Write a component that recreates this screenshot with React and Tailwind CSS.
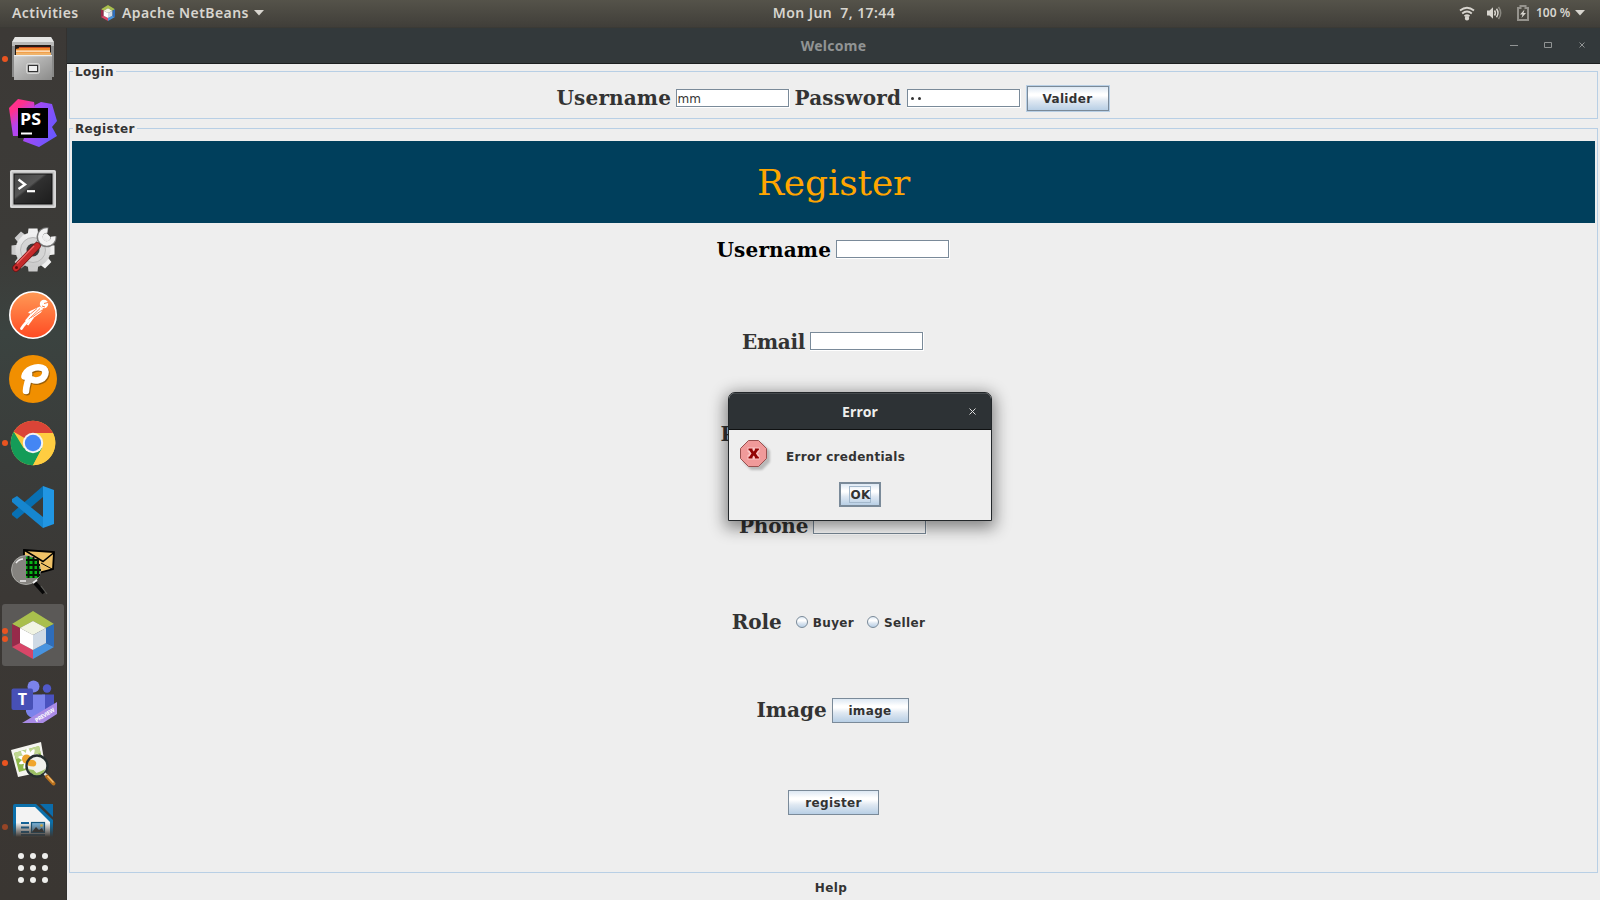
const LABEL = "font-['DejaVu_Serif',serif] font-bold text-[20px] leading-[24px] whitespace-nowrap shrink-0";
const SMALL = "font-['DejaVu_Sans',sans-serif] font-bold text-[12px] tracking-[0.35px] text-[#333] whitespace-nowrap";
const BAR = "font-['Noto_Sans',sans-serif] text-[14px] leading-[18px] tracking-[0.42px] whitespace-nowrap";
const GRAD = "bg-[linear-gradient(180deg,#dde8f3_0%,#ffffff_30%,#ffffff_38%,#dfe8f2_60%,#b8cfe5_100%)]";

function Field({ children }) {
  return (
    <div className="h-[19px] w-[114px] shrink-0 border-r border-b border-white">
      <div className="flex h-[18px] w-[113px] items-center border border-[#7a8a99] bg-white pt-[1px] pl-[1px] font-['DejaVu_Sans',sans-serif] text-[12px] leading-none text-[#333]">
        {children}
      </div>
    </div>
  );
}

function Button({ children, className = "" }) {
  return (
    <div className={`flex h-[25px] shrink-0 items-center justify-center border border-[#7a8a99] ${GRAD} ${SMALL} ${className}`}>
      {children}
    </div>
  );
}

function Row({ label, labelClass, className = "", children }) {
  return (
    <div className={`flex h-[92px] items-start justify-center gap-[5px] pt-[15px] ${className}`}>
      <div className={`${LABEL} ${labelClass}`}>{label}</div>
      {children}
    </div>
  );
}

function Panel({ title, className, children }) {
  return (
    <div className={`relative border border-[#b8cfe5] ${className}`}>
      <div className={`absolute -top-[7px] left-[3px] bg-[#eee] pr-[2px] pl-[2px] leading-[15px] ${SMALL}`}>{title}</div>
      {children}
    </div>
  );
}

function Files() {
  return (
    <svg viewBox="0 0 48 48" className="size-[48px]">
      <defs>
        <linearGradient id="fa" x1="0" y1="0" x2="1" y2="1"><stop offset="0" stopColor="#d0d0cf" /><stop offset="1" stopColor="#8b8b8a" /></linearGradient>
      </defs>
      <path d="M6 2h36l3 5v35H3V7z" fill="#8a8a89" />
      <path d="M6 2h36l3 5H3z" fill="#e4e4e3" />
      <path d="M3 7h42v4H3z" fill="#b9b9b8" />
      <path d="M6 10h36v11H6z" fill="#241b17" />
      <path d="M10 12h31v4H10z" fill="#c64a1d" />
      <path d="M7 14l4-1h30v6H7z" fill="#f28a2c" />
      <path d="M7 15.500h34v1.200H7z" fill="#fff3dd" />
      <path d="M7 17.500h35v2.500H7z" fill="#efb36a" />
      <path d="M5 20h38v25H5z" fill="url(#fa)" />
      <path d="M5 20h38v1.200H5z" fill="#eee" />
      <rect x="17.500" y="28.500" width="13" height="10" rx="2" fill="#b0b0af" stroke="#d8d8d7" />
      <rect x="19.500" y="30.500" width="9" height="6" fill="#eee" stroke="#333" />
    </svg>
  );
}

function PhpStorm() {
  return (
    <svg viewBox="0 0 48 48" className="size-[48px]">
      <defs>
        <linearGradient id="p1" x1="0" y1="0" x2=".6" y2="1"><stop offset=".3" stopColor="#ff318c" /><stop offset=".65" stopColor="#b345f1" /></linearGradient>
        <linearGradient id="p2" x1="0" y1="0" x2="1" y2=".5"><stop offset=".2" stopColor="#b345f1" /><stop offset="1" stopColor="#6b57ff" /></linearGradient>
      </defs>
      <path d="M26 6l6-3 11 2 5 17-5 6 5 9-18 11-16-6z" fill="url(#p2)" />
      <path d="M9 0l16 3 2 12-13 22H4L0 9z" fill="url(#p1)" />
      <rect x="9" y="9" width="30" height="30" fill="#000" />
      <rect x="12" y="33.500" width="11" height="2" fill="#fff" />
      <text x="11" y="25.500" fill="#fff" fontSize="16.500" fontWeight="700" fontFamily="Open Sans, sans-serif" textLength="21" lengthAdjust="spacingAndGlyphs">PS</text>
    </svg>
  );
}

function Terminal() {
  return (
    <svg viewBox="0 0 48 48" className="size-[48px]">
      <defs><linearGradient id="t1" x1="0" y1="0" x2="1" y2="1"><stop offset="0" stopColor="#444" /><stop offset=".4" stopColor="#555" /><stop offset=".45" stopColor="#303030" /><stop offset="1" stopColor="#1c1c1c" /></linearGradient></defs>
      <rect x="1" y="5" width="46" height="38" rx="1.500" fill="#c3c3c3" />
      <rect x="2" y="6" width="44" height="36" rx="1" fill="none" stroke="#e9e9e9" />
      <rect x="5" y="9" width="38" height="30" fill="url(#t1)" stroke="#111" />
      <path d="M9.500 14.500l6.500 5-6.500 4.500" fill="none" stroke="#fff" strokeWidth="2.400" />
      <path d="M18 26.200h8" stroke="#fff" strokeWidth="2.200" />
    </svg>
  );
}

function Settings() {
  return (
    <svg viewBox="0 0 48 48" className="size-[48px]">
      <defs><linearGradient id="s1" x1="0" y1="0" x2="0" y2="1"><stop offset="0" stopColor="#f2f2f2" /><stop offset="1" stopColor="#c9c9c9" /></linearGradient></defs>
      {[0, 45, 90, 135].map((a) => (
        <path key={a} d="M19.500 2.500h9l1 8h-11zM19.500 45.500h9l1-8h-11z" fill="url(#s1)" transform={`rotate(${a} 24 24)`} />
      ))}
      <circle cx="24" cy="24" r="17.500" fill="url(#s1)" />
      <circle cx="24" cy="24" r="12.500" fill="#d5d5d5" stroke="#b7b7b7" />
      <circle cx="24" cy="24" r="6.500" fill="#3c3c3c" />
      <path d="M29 18l4-4" stroke="#777" strokeWidth="6.400" />
      <path d="M28 19l6-6" stroke="#f2f2f2" strokeWidth="4.800" />
      <path d="M39 4.500A7 7 0 1 0 44.500 10.500" fill="none" stroke="#777" strokeWidth="6" />
      <path d="M38.500 4.500A6.500 6.500 0 1 0 44.300 10.500" fill="none" stroke="#f2f2f2" strokeWidth="4.600" />
      <path d="M7 42L28 20" stroke="#6e1212" strokeWidth="7.400" strokeLinecap="round" />
      <path d="M7 42L28 20" stroke="#c42a2a" strokeWidth="6" strokeLinecap="round" />
      <path d="M8 37.500L25 20" stroke="#e66" strokeWidth="1.200" />
      <circle cx="7.500" cy="41.500" r="1.500" fill="#5c0d0d" />
    </svg>
  );
}

function Postman() {
  return (
    <svg viewBox="0 0 48 48" className="size-[48px]">
      <defs><linearGradient id="o1" x1="0" y1="0" x2="0" y2="1"><stop offset="0" stopColor="#ff9a56" /><stop offset="1" stopColor="#ff4a22" /></linearGradient></defs>
      <circle cx="24" cy="24" r="23.200" fill="url(#o1)" stroke="#fff" strokeWidth="1.600" />
      <circle cx="35" cy="13" r="4.200" fill="#fff" />
      <path d="M35 12.500l4-1M33 15l3 1" stroke="#ff7a40" strokeWidth="1" />
      <path d="M31 15.500l-10 4.500-2 2 3 .5-6 7 3 1.500 6-4.500 7-5 2-4z" fill="#fff" />
      <path d="M31 17.500L19 29M33 19l-11 8M28 17.500l-6 5" stroke="#ff7640" strokeWidth=".9" />
      <path d="M19 29.500l-4.500 5-2 3" fill="none" stroke="#fff" strokeWidth="2.800" strokeLinecap="round" />
      <path d="M24 26.500l-5.500 7.500" stroke="#fff" strokeWidth="2" />
    </svg>
  );
}

function Pencil() {
  const glyph = "M15.500 21.500C17 14 27 11 33 12.800S37 23.500 29 25.200C26 26 24 25 23 24.500M20 18C20.500 24 17 30 17 36";
  return (
    <svg viewBox="0 0 48 48" className="size-[48px]">
      <circle cx="24" cy="24" r="24" fill="#f18f00" />
      <g fill="none" strokeLinecap="round" strokeLinejoin="round">
        <path d={glyph} stroke="#9a5f08" strokeWidth="6.600" transform="translate(1 1.200)" />
        <path d={glyph} stroke="#fff" strokeWidth="6.600" />
      </g>
    </svg>
  );
}

function Chrome() {
  return (
    <svg viewBox="0 0 48 48" className="size-[48px]">
      <circle cx="24" cy="24" r="22.300" fill="#fdc83b" />
      <path d="M24 24L4.700 12.850A22.300 22.300 0 0 1 43.300 12.850L44 14H24z" fill="#da4437" />
      <path d="M4.700 12.850A22.300 22.300 0 0 0 24 46.300L33.400 29 24 24 14.600 29z" fill="#149c58" />
      <path d="M24 46.300L33 29 24 24V14h20a22.300 22.300 0 0 1-20 32.300z" fill="#ffcd41" />
      <circle cx="24" cy="24" r="10.200" fill="#f3f3f3" />
      <circle cx="24" cy="24" r="8.200" fill="#4486f4" />
    </svg>
  );
}

function VsCode() {
  return (
    <svg viewBox="0 0 48 48" className="size-[48px]">
      <path d="M34 3v11L8 36l-5-4v-2z" fill="#0870b3" />
      <path d="M34 45V34L8 13l-5 3v3z" fill="#1686cf" />
      <path d="M34 3l11 4v34l-11 4z" fill="#2196e3" />
    </svg>
  );
}

function MailSearch() {
  return (
    <svg viewBox="0 0 48 48" className="size-[48px]">
      <path d="M15 3l30 2-1 17-15 4-14 2z" fill="#efc267" stroke="#000" strokeWidth="1.800" />
      <path d="M16 3.500l18 11 11-9" fill="none" stroke="#000" strokeWidth="1.600" />
      <path d="M32 16l11 6" stroke="#000" strokeWidth="1" />
      <circle cx="17" cy="23" r="14.500" fill="#85837f" stroke="#a9a9a5" />
      <path d="M17 9.500a14 14 0 0 1 13.500 18L29 31H17z" fill="#08b416" />
      <path d="M17 13h11M17 18h14M17 23h15M17 28h14M19.500 9v22M24.500 10v21M29 12v18" stroke="#021804" strokeWidth="2" />
      <path d="M7 16q3-4 7-4M11 34h6" stroke="#eee" strokeWidth="1.500" fill="none" />
      <path d="M24 36l4-3" stroke="#eee" strokeWidth="1.800" />
      <path d="M26 36l9 10" stroke="#070707" strokeWidth="4" />
      <path d="M32 39l6 8" stroke="#5c5c58" strokeWidth="1.200" />
    </svg>
  );
}

function NetBeans({ className }) {
  return (
    <svg viewBox="0 0 48 48" className={className}>
      <path d="M24 0l21 13-8 4-13-7-13 7-8-4z" fill="#a9bf4d" />
      <path d="M3 13l8 4v15l-8 4z" fill="#962a4a" />
      <path d="M3 36l8-4 13 7v9z" fill="#d84668" />
      <path d="M24 48v-9l13-7 8 4z" fill="#4893df" />
      <path d="M45 13v23l-8-4V17z" fill="#2e6dbb" />
      <path d="M24 10l13 7-13 7-13-7z" fill="#f1f4e3" />
      <path d="M11 17l13 7v15l-13-7z" fill="#fff" />
      <path d="M37 17v15l-13 7V24z" fill="#cfdae5" />
    </svg>
  );
}

function Teams() {
  return (
    <svg viewBox="0 0 48 48" className="size-[48px]">
      <circle cx="24.500" cy="8.500" r="6" fill="#7b83eb" />
      <circle cx="38" cy="10.500" r="4.200" fill="#5059c9" />
      <path d="M33 16.500h12v15a8 8 0 0 1-12 4z" fill="#4a52bf" />
      <path d="M16 16.500h20v17c-3 9-17 9-19 0z" fill="#7b83eb" />
      <rect x="2.500" y="10.500" width="21.500" height="21.500" rx="2" fill="#4750b6" />
      <text x="13.300" y="27" textAnchor="middle" fill="#fff" fontSize="16" fontWeight="700" fontFamily="Open Sans, sans-serif">T</text>
      <path d="M13 45L48 24v12L34 45z" fill="#a98be6" />
      <text transform="translate(27.500 44.500) rotate(-32)" fill="#fff" fontSize="5.600" fontWeight="700" fontFamily="Open Sans, sans-serif" textLength="22">PREVIEW</text>
    </svg>
  );
}

function ImageViewer() {
  return (
    <svg viewBox="0 0 48 48" className="size-[48px]">
      <path d="M2 11l30-8 5 29-28 6z" fill="#f4f4ef" />
      <path d="M5 14l25-7 4.500 19L10 33z" fill="#8fb94a" />
      <path d="M5 14l25-7 1.500 7L7 20z" fill="#bfd690" />
      <g fill="#fff">
        {[10, 46, 82, 118, 154].map((a) => (
          <ellipse key={a} cx="20" cy="20" rx="11" ry="2.600" transform={`rotate(${a} 20 20)`} />
        ))}
      </g>
      <circle cx="17.500" cy="20" r="4.500" fill="#eba52d" />
      <circle cx="28" cy="27" r="10.500" fill="#eff1ec" />
      <path d="M18.500 30l6 1 3 3 5-2 4-2q-2 5-7 6.500T18.500 30z" fill="#9cc065" />
      <path d="M19 22q5-3 8 1 1 4-2 4.500-4 0-6-1z" fill="#f0a62d" />
      <circle cx="28" cy="27" r="10.500" fill="none" stroke="#26302f" strokeWidth="2.400" />
      <path d="M35.500 34.500l3 3" stroke="#ddd" strokeWidth="2.500" />
      <path d="M38 37.500l6.500 7" stroke="#b8701d" strokeWidth="4" strokeLinecap="round" />
      <path d="M38.500 37l6 6.500" stroke="#f3b968" strokeWidth="1.500" />
    </svg>
  );
}

function Writer() {
  return (
    <svg viewBox="0 0 48 36" className="h-[36px] w-[48px]">
      <defs><linearGradient id="w1" x1="0" y1="0" x2="0" y2="1"><stop offset=".6" stopColor="#3a3632" stopOpacity="0" /><stop offset="1" stopColor="#3a3632" /></linearGradient></defs>
      <path d="M4 5a2 2 0 0 1 2-2h21l17 16v17H4z" fill="#0c70ab" />
      <path d="M7 6h19l15 15v15H7z" fill="#f3f3f3" />
      <path d="M31 3h13v13z" fill="#0b6cab" />
      <path d="M12 22h8M12 26.500h8M12 31h8M12 34h24" stroke="#14649a" strokeWidth="1.800" />
      <rect x="22.500" y="21.500" width="13" height="10" fill="#7ab3da" stroke="#14577f" strokeWidth="1.200" />
      <path d="M23 31l4-5 3 3 3-2 2 4z" fill="#333" />
      <circle cx="32.500" cy="24.500" r="1.300" fill="#f4c23c" />
      <rect width="48" height="36" fill="url(#w1)" />
    </svg>
  );
}

function DockItem({ dots = 0, dim = false, className = "", children }) {
  return (
    <div className={`relative flex shrink-0 justify-center ${className}`}>
      {dots > 0 && (
        <div className={`absolute bottom-0 left-[2px] flex flex-col justify-center gap-[2px] ${dim ? "top-[15px]" : "top-0"}`}>
          {Array.from({ length: dots }).map((_, i) => (
            <div key={i} className={`size-[6px] rounded-full ${dim ? "bg-[#964527]" : "bg-[#e95420]"}`} />
          ))}
        </div>
      )}
      {children}
    </div>
  );
}

function Dock() {
  return (
    <div className="flex w-[67px] shrink-0 flex-col bg-[linear-gradient(180deg,#3c3936_0%,#3c3b38_25%,#3b4340_35%,#3a3c3a_50%,#3b3835_65%,#3a3632_100%)] pt-[7px] pr-[1px] shadow-[inset_-1px_0_0_#33312f]">
      <DockItem dots={1}><Files /></DockItem>
      <DockItem className="mt-[16px]"><PhpStorm /></DockItem>
      <DockItem className="mt-[18px]"><Terminal /></DockItem>
      <DockItem className="mt-[13px]"><Settings /></DockItem>
      <DockItem className="mt-[17px]"><Postman /></DockItem>
      <DockItem className="mt-[16px]"><Pencil /></DockItem>
      <DockItem className="mt-[16px]" dots={1}><Chrome /></DockItem>
      <DockItem className="mt-[16px]"><VsCode /></DockItem>
      <DockItem className="mt-[16px]"><MailSearch /></DockItem>
      <DockItem className="mt-[9px] h-[62px] items-center">
        <div className="flex h-[62px] w-[62px] items-center justify-center rounded-[3px] bg-[#5b5957]"><NetBeans className="size-[48px]" /></div>
        <div className="absolute top-0 bottom-0 left-[2px] flex flex-col justify-center gap-[2px]">
          <div className="size-[6px] rounded-full bg-[#e95420]" />
          <div className="size-[6px] rounded-full bg-[#e95420]" />
        </div>
      </DockItem>
      <DockItem className="mt-[12px]"><Teams /></DockItem>
      <DockItem className="mt-[13px]" dots={1}><ImageViewer /></DockItem>
      <DockItem className="mt-[14px]" dots={1} dim><Writer /></DockItem>
      <div className="mt-[16px] grid grid-cols-3 gap-[6px] self-center">
        {Array.from({ length: 9 }).map((_, i) => (
          <div key={i} className="size-[6px] rounded-full bg-[#eeeeec]" />
        ))}
      </div>
    </div>
  );
}

function TopBar() {
  return (
    <div className="grid h-[28px] shrink-0 grid-cols-[1fr_auto_1fr] items-center border-b border-[#3b3a35] bg-[linear-gradient(180deg,#55534a,#403e39)] pb-[1px] text-[#d8d5cf]">
      <div className="flex items-center pl-[12px]">
        <span className={`-mt-[1px] w-[68px] font-semibold ${BAR}`}>Activities</span>
        <NetBeans className="ml-[20px] size-[16px]" />
        <span className={`-mt-[1px] ml-[6px] w-[127px] font-semibold ${BAR}`}>Apache NetBeans</span>
        <svg viewBox="0 0 10 6" className="ml-[5px] h-[6px] w-[10px]"><path d="M0 0h10L5 5.500z" fill="currentColor" /></svg>
      </div>
      <span className={`-mt-[1px] pl-[68px] font-semibold ${BAR}`}>Mon Jun&nbsp; 7, 17:44</span>
      <div className="flex items-center justify-end pr-[15px]">
        <svg viewBox="0 0 16 16" className="h-[16px] w-[16px]" fill="none" stroke="currentColor" strokeWidth="1.800">
          <path d="M1 5.500q7-5.500 14 0M3.200 8.500q4.800-4 9.600 0M5.500 11.200q2.500-2 5 0" /><circle cx="8" cy="13.200" r="1.300" fill="currentColor" />
        </svg>
        <svg viewBox="0 0 16 16" className="ml-[11px] h-[16px] w-[16px]" fill="none" stroke="currentColor" strokeWidth="1.500">
          <path d="M1 5.500h2.500L7 2.200v11.600L3.500 10.500H1z" fill="currentColor" stroke="none" />
          <path d="M8.500 5.500q1.800 2.500 0 5M10.500 3.800q3 4.200 0 8.400" /><path d="M12.500 2q4.400 6 0 12" opacity=".45" />
        </svg>
        <svg viewBox="0 0 12 16" className="ml-[15px] h-[16px] w-[12px]">
          <path d="M1 3h2.500V1h5v2H11v12H1z" fill="none" stroke="#95938d" strokeWidth="2" /><path d="M7.500 4.500L3 9.500h2.500L4.500 13 9 8H6.500z" fill="currentColor" />
        </svg>
        <span className="ml-[7px] w-[33px] font-['Noto_Sans',sans-serif] text-[12px] font-semibold whitespace-nowrap">100 %</span>
        <svg viewBox="0 0 10 6" className="ml-[6px] h-[6px] w-[10px]"><path d="M0 0h10L5 5.500z" fill="currentColor" /></svg>
      </div>
    </div>
  );
}

function Dialog() {
  return (
    <div className="absolute top-[392px] left-[728px] flex h-[129px] w-[264px] flex-col overflow-hidden rounded-t-[7px] border border-[#23272a] bg-[#eee] shadow-[0_4px_16px_3px_rgba(0,0,0,0.45)]">
      <div className="relative flex h-[37px] items-center justify-center border-t border-b border-t-[#454a4d] border-b-[#0f1112] bg-[#2d3235]">
        <span className="font-['Noto_Sans',sans-serif] text-[14px] font-bold tracking-[0.2px] text-[#eeeeec]">Error</span>
        <svg viewBox="0 0 7 7" className="absolute top-[14px] right-[15px] size-[7px]"><path d="M.5.500l6 6M6.500.500l-6 6" stroke="#dcdcdc" strokeWidth="1" /></svg>
      </div>
      <div className="flex h-[52px] pt-[10px] pl-[11px]">
        <svg viewBox="0 0 32 32" className="size-[32px]">
          <path d="M11 3h11l8 8v11l-8 8H11l-8-8V11z" fill="#000" opacity=".22" className="blur-[1px]" />
          <path d="M8.500.500h10l8 8v10l-8 8h-10l-8-8v-10z" fill="#f09a9a" stroke="#98504f" />
          <path d="M7.500 7.500h12v4l-2 2 2 2v4h-12v-4l2-2-2-2z" fill="#fbc4c4" />
          <path d="M8.500 8.500h4v1.400l1.200 1.600 1.200-1.600V8.500h4v1.800h-.8l-2.200 3.200 2.200 3.200h.8v1.800h-4v-1.400l-1.200-1.600-1.200 1.600v1.400h-4v-1.800h.8l2.200-3.200-2.200-3.200h-.8z" fill="#930606" />
        </svg>
        <span className="mt-[9px] ml-[14px] font-['DejaVu_Sans',sans-serif] text-[12px] leading-[16px] font-bold tracking-[0.3px] whitespace-nowrap text-[#333]">Error credentials</span>
      </div>
      <div className={`flex h-[25px] w-[42px] items-center justify-center self-center border-2 border-[#7a8a99] ${GRAD}`}>
        <div className={`flex h-[17px] w-[22px] items-center justify-center border border-[#a3b8cc] pl-[1px] ${SMALL}`}>OK</div>
      </div>
    </div>
  );
}

function Radio({ label, className }) {
  return (
    <div className={`flex items-start ${className}`}>
      <div className={`size-[12px] rounded-full border border-[#7a8a99] ${GRAD}`} />
      <span className={`ml-[5px] leading-[15px] ${SMALL}`}>{label}</span>
    </div>
  );
}

export default function App() {
  return (
    <div className="relative flex h-[900px] w-[1600px] flex-col overflow-hidden bg-[#eee]">
      <TopBar />
      <div className="flex min-h-0 flex-1">
        <Dock />
        <div className="flex flex-1 flex-col">
          <div className="relative flex h-[36px] shrink-0 items-center justify-center border-b border-[#1c1f20] bg-[#33393b]">
            <span className="font-['Noto_Sans',sans-serif] text-[14px] font-bold tracking-[0.25px] text-[#919494]">Welcome</span>
            <svg viewBox="0 0 78 10" className="absolute top-[12px] right-[13px] h-[10px] w-[78px]" fill="none" stroke="#919494">
              <path d="M1 5.500h8" /><path d="M35.500 2.500h7v5h-7z" /><path d="M70.500 2.500l5 5M75.500 2.500l-5 5" />
            </svg>
          </div>
          <div className="flex flex-1 flex-col px-[2px] pt-[7px]">
            <Panel title="Login" className="flex h-[48px] items-start justify-center gap-[5px] pt-[13px] pr-[2px]">
              <div className={`mt-[1px] w-[115px] pl-[1px] tracking-[0.15px] text-[#333] ${LABEL}`}>Username</div>
              <div className="mt-[4px]"><Field>mm</Field></div>
              <div className={`mt-[1px] w-[107px] tracking-[0.2px] text-[#333] ${LABEL}`}>Password</div>
              <div className="mt-[4px]"><Field><span className="ml-[2px] flex gap-[4px]"><i className="size-[3px] rounded-full bg-[#333]" /><i className="size-[3px] rounded-full bg-[#333]" /></span></Field></div>
              <div className="border border-[#b8cfe5]"><Button className="h-[23px] w-[82px]">Valider</Button></div>
            </Panel>
            <Panel title="Register" className="mt-[9px] h-[745px] px-[2px] pt-[12px]">
              <div className="flex h-[82px] items-center justify-center bg-[#003f5c] pt-[2px] font-['DejaVu_Serif',serif] text-[36px] leading-none tracking-[-0.15px] text-[#ffa600]">Register</div>
              <Row label="Username" className="pr-[2px]" labelClass="w-[115px] pl-[1px] tracking-[0.15px] text-black"><div className="mt-[2px]"><Field /></div></Row>
              <Row label="Email" labelClass="w-[62px] -indent-[1px] tracking-[-0.3px] text-[#333]"><div className="mt-[2px]"><Field /></div></Row>
              <Row label="Password" labelClass="w-[107px] text-[#333]"><div className="mt-[2px]"><Field /></div></Row>
              <Row label="Phone" labelClass="w-[68px] -indent-[1px] tracking-[-0.2px] text-[#333]"><div className="mt-[2px]"><Field /></div></Row>
              <Row label="Role" labelClass="mt-[4px] w-[50px] tracking-[-0.1px] text-[#333]">
                <Radio label="Buyer" className="mt-[10px] ml-[9px]" />
                <Radio label="Seller" className="mt-[10px] mr-[10px] ml-[8px]" />
              </Row>
              <Row label="Image" className="pr-[2px]" labelClass="w-[70px] text-[#333]"><Button className="w-[77px]">image</Button></Row>
              <div className="flex justify-center pt-[15px]"><Button className="w-[91px]">register</Button></div>
            </Panel>
            <div className={`mt-[8px] mr-[5px] text-center leading-[15px] ${SMALL}`}>Help</div>
          </div>
        </div>
      </div>
      <Dialog />
    </div>
  );
}
